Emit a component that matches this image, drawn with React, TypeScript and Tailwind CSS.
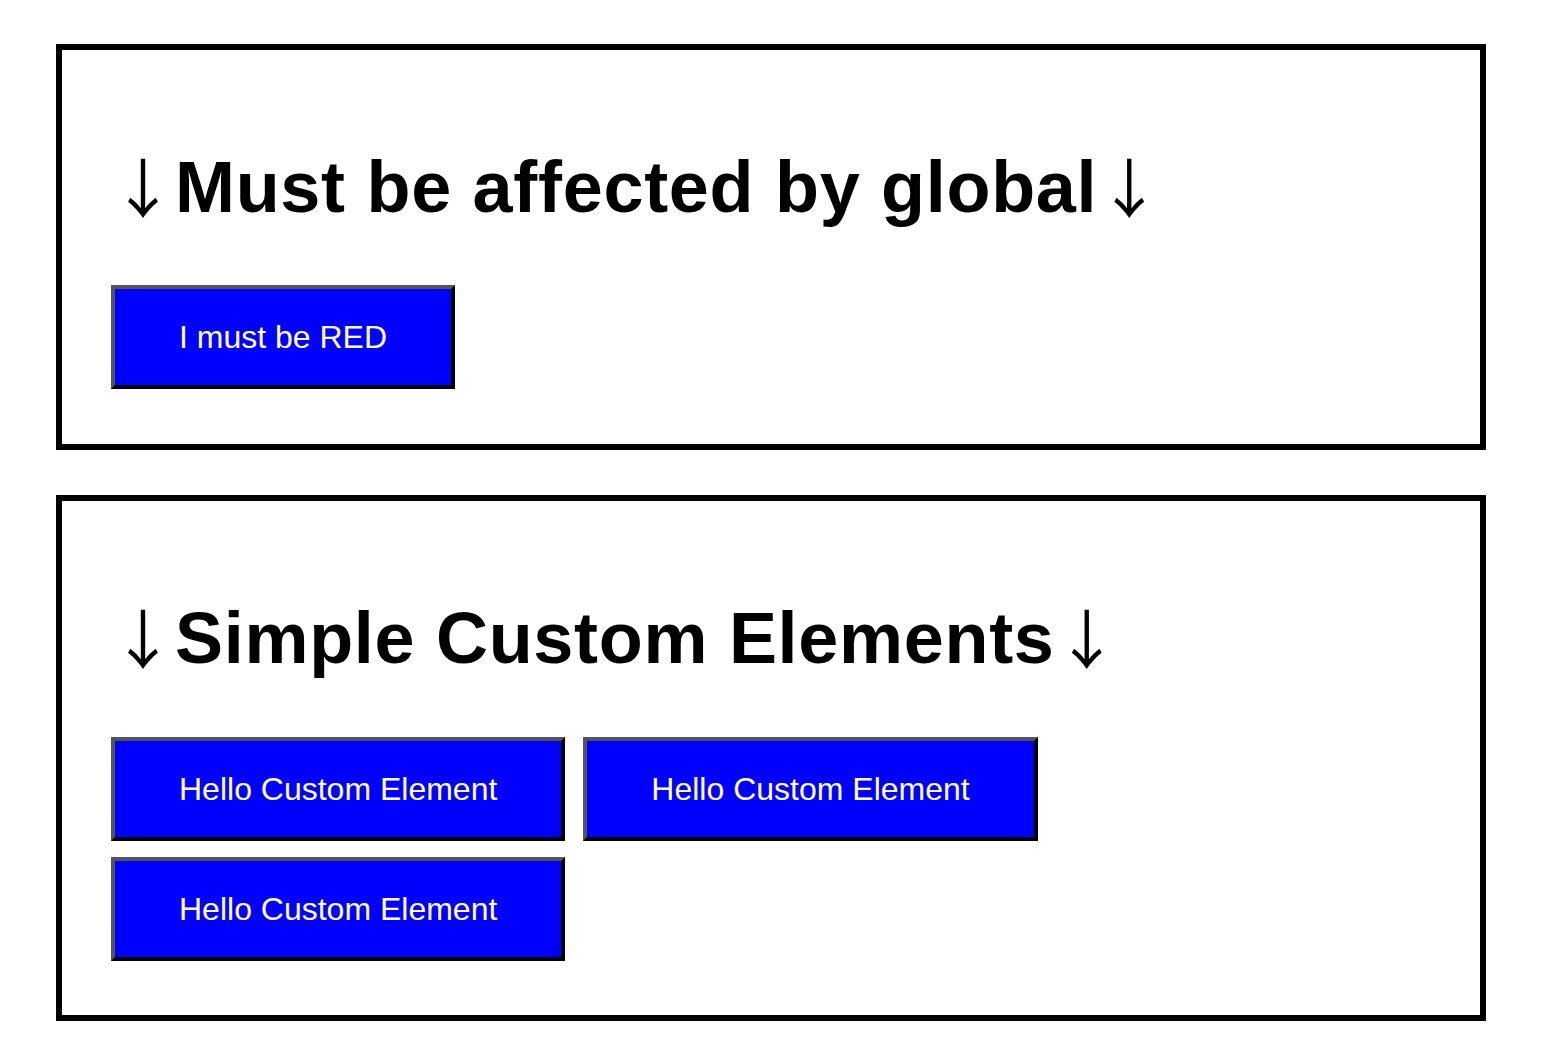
import React from 'react';

function BlueButton({ label }: { label: string }) {
  return (
    <button
      type="button"
      className="h-[104px] px-[64px] bg-[#0000ff] text-white text-[32px] leading-[37px] border-[4px] border-t-[#555555] border-l-[#555555] border-b-black border-r-black"
    >
      {label}
    </button>
  );
}

// arrows render thin in the original, so keep them out of the bold run
function Arrow() {
  return <span className="font-normal font-['Noto_Sans_CJK_JP',sans-serif] text-[64px] leading-none">↓</span>;
}

function Heading({ text }: { text: string }) {
  return (
    <h1 className="mt-[96px] h-[83px] text-[72px] leading-[83px] font-bold text-black whitespace-nowrap">
      <Arrow />
      <span className="tracking-[0.7px]">{text}</span>
      <Arrow />
    </h1>
  );
}

export default function App() {
  return (
    <div className="min-h-[1062px] bg-white px-[56px] pt-[44px] pb-[40px] flex flex-col gap-[45px] font-['Liberation_Sans',Arial,sans-serif]">
      {/* global */}
      <section className="border-[6px] border-black pl-[49px] pb-[55px]">
        <Heading text="Must be affected by global" />
        <div className="mt-[56px] flex">
          <BlueButton label="I must be RED" />
        </div>
      </section>

      {/* custom elements */}
      <section className="border-[6px] border-black pl-[49px] pb-[54px]">
        <Heading text="Simple Custom Elements" />
        <div className="mt-[57px] flex flex-col gap-[16px]">
          <div className="flex gap-[18px]">
            <BlueButton label="Hello Custom Element" />
            <BlueButton label="Hello Custom Element" />
          </div>
          <div className="flex">
            <BlueButton label="Hello Custom Element" />
          </div>
        </div>
      </section>
    </div>
  );
}
